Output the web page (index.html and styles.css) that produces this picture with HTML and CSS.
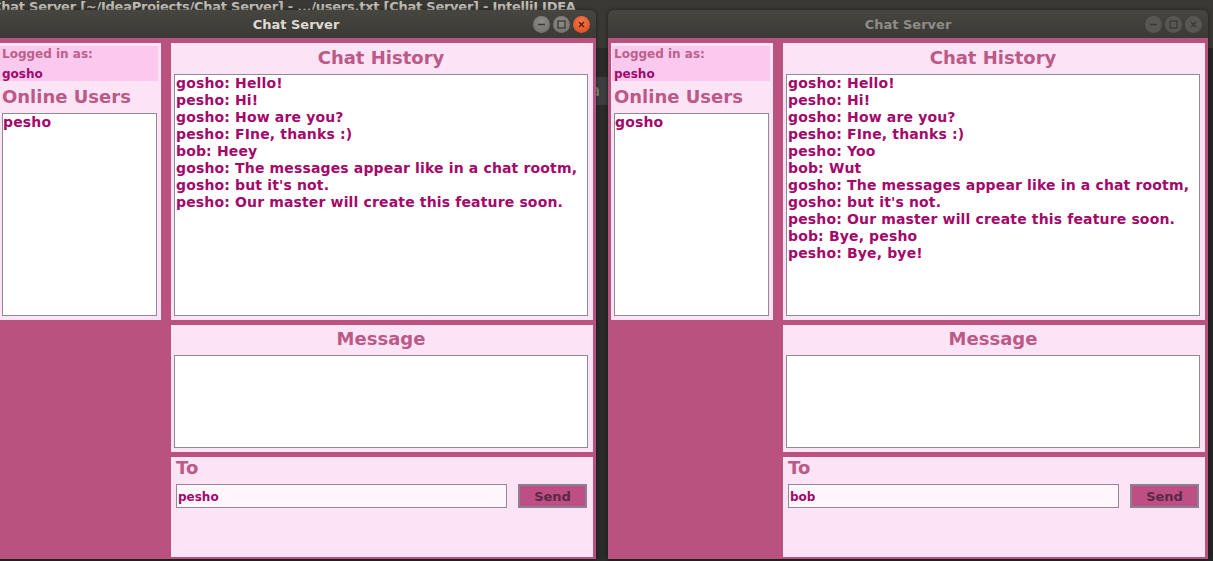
FILE: index.html
```html
<!DOCTYPE html>
<html>
<head>
<meta charset="utf-8">
<title>Chat Server</title>
<link rel="stylesheet" href="styles.css">
</head>
<body>
<div class="desktop">
  <div class="ide-bar"><span class="ide-title">Chat Server [~/IdeaProjects/Chat Server] - .../users.txt [Chat Server] - IntelliJ IDEA</span></div>
  <div class="ide-side"><div class="ide-tab">va</div></div>

  <div class="window win-a active">
    <div class="titlebar">
      <span class="title">Chat Server</span>
      <div class="controls">
        <span class="btn btn-min"><svg width="17" height="17" viewBox="0 0 17 17"><line x1="5" y1="8.5" x2="12" y2="8.5" stroke="currentColor" stroke-width="1.4"/></svg></span>
        <span class="btn btn-max"><svg width="17" height="17" viewBox="0 0 17 17"><rect x="5" y="5" width="7" height="7" fill="none" stroke="currentColor" stroke-width="1.3"/></svg></span>
        <span class="btn btn-close"><svg width="17" height="17" viewBox="0 0 17 17"><path d="M6 6 L11 11 M11 6 L6 11" stroke="currentColor" stroke-width="1.4" fill="none"/></svg></span>
      </div>
    </div>
    <div class="frame">
      <div class="side">
        <div class="logged">
          <div class="logged-label">Logged in as:</div>
          <div class="logged-user">gosho</div>
        </div>
        <div class="heading side-heading">Online Users</div>
        <div class="userlist">pesho</div>
      </div>
      <div class="main">
        <section class="panel history">
          <div class="heading center">Chat History</div>
          <div class="textbox">
            <div>gosho: Hello!</div>
            <div>pesho: Hi!</div>
            <div>gosho: How are you?</div>
            <div>pesho: FIne, thanks :)</div>
            <div>bob: Heey</div>
            <div>gosho: The messages appear like in a chat rootm,</div>
            <div>gosho: but it's not.</div>
            <div>pesho: Our master will create this feature soon.</div>
          </div>
        </section>
        <section class="panel message">
          <div class="heading center">Message</div>
          <div class="textbox"></div>
        </section>
        <section class="panel to">
          <div class="heading">To</div>
          <div class="to-row">
            <div class="to-input">pesho</div>
            <div class="send">Send</div>
          </div>
        </section>
      </div>
    </div>
  </div>

  <div class="window win-b">
    <div class="titlebar">
      <span class="title">Chat Server</span>
      <div class="controls">
        <span class="btn btn-min"><svg width="17" height="17" viewBox="0 0 17 17"><line x1="5" y1="8.5" x2="12" y2="8.5" stroke="currentColor" stroke-width="1.4"/></svg></span>
        <span class="btn btn-max"><svg width="17" height="17" viewBox="0 0 17 17"><rect x="5" y="5" width="7" height="7" fill="none" stroke="currentColor" stroke-width="1.3"/></svg></span>
        <span class="btn btn-close"><svg width="17" height="17" viewBox="0 0 17 17"><path d="M6 6 L11 11 M11 6 L6 11" stroke="currentColor" stroke-width="1.4" fill="none"/></svg></span>
      </div>
    </div>
    <div class="frame">
      <div class="side">
        <div class="logged">
          <div class="logged-label">Logged in as:</div>
          <div class="logged-user">pesho</div>
        </div>
        <div class="heading side-heading">Online Users</div>
        <div class="userlist">gosho</div>
      </div>
      <div class="main">
        <section class="panel history">
          <div class="heading center">Chat History</div>
          <div class="textbox">
            <div>gosho: Hello!</div>
            <div>pesho: Hi!</div>
            <div>gosho: How are you?</div>
            <div>pesho: FIne, thanks :)</div>
            <div>pesho: Yoo</div>
            <div>bob: Wut</div>
            <div>gosho: The messages appear like in a chat rootm,</div>
            <div>gosho: but it's not.</div>
            <div>pesho: Our master will create this feature soon.</div>
            <div>bob: Bye, pesho</div>
            <div>pesho: Bye, bye!</div>
          </div>
        </section>
        <section class="panel message">
          <div class="heading center">Message</div>
          <div class="textbox"></div>
        </section>
        <section class="panel to">
          <div class="heading">To</div>
          <div class="to-row">
            <div class="to-input">bob</div>
            <div class="send">Send</div>
          </div>
        </section>
      </div>
    </div>
  </div>
</div>
</body>
</html>
```

FILE: styles.css
```css
html, body {
  margin: 0;
  padding: 0;
  height: 100%;
}

body {
  background: #262626;
  font-family: "DejaVu Sans", sans-serif;
  overflow: hidden;
}

.desktop {
  position: relative;
  width: 1213px;
  height: 561px;
  overflow: hidden;
}

/* background IDE window */
.ide-bar {
  position: absolute;
  left: 0;
  top: 0;
  width: 1213px;
  height: 48px;
  background: #3a3935;
}

.ide-title {
  position: absolute;
  left: -8px;
  top: -1px;
  font-size: 13px;
  font-weight: bold;
  letter-spacing: -0.25px;
  color: #bfbcb4;
  white-space: nowrap;
}

.ide-side {
  position: absolute;
  left: 560px;
  top: 48px;
  width: 48px;
  height: 513px;
  background: #2b2b2b;
}

.ide-tab {
  margin-top: 29px;
  height: 28px;
  background: #3c3e3f;
  color: #8c9884;
  font-size: 15px;
  line-height: 28px;
  text-align: right;
  padding-right: 8px;
}

/* application windows */
.window {
  position: absolute;
  top: 10px;
  width: 600px;
  height: 549px;
  display: flex;
  flex-direction: column;
  border-radius: 6px 6px 0 0;
  overflow: hidden;
  box-shadow: 0 0 4px rgba(0, 0, 0, 0.5);
}

.win-a {
  left: -4px;
  z-index: 2;
}

.win-b {
  left: 608px;
  z-index: 1;
}

.titlebar {
  height: 28px;
  flex: none;
  background: linear-gradient(#46453f, #3b3a36);
  display: grid;
  grid-template-columns: 1fr auto 1fr;
  align-items: center;
}

.title {
  grid-column: 2;
  font-size: 13px;
  font-weight: bold;
  color: #dfdbd2;
}

.win-b .title {
  color: #8e8c86;
}

.controls {
  grid-column: 3;
  justify-self: end;
  display: flex;
  gap: 3px;
  margin-right: 6px;
  margin-top: 1px;
}

.btn {
  width: 17px;
  height: 17px;
  border-radius: 50%;
  display: block;
  background: radial-gradient(circle at 50% 35%, #8e8c87, #6d6b66);
  color: #3a3935;
}

.btn svg {
  display: block;
}

.btn-close {
  background: radial-gradient(circle at 50% 35%, #f27a4e, #d9461a);
  color: #5a1c08;
}

.win-b .btn {
  background: #585753;
  color: #3b3a36;
}

.frame {
  flex: 1;
  background: #b9527f;
  display: flex;
  gap: 10px;
  padding: 5px 3px 2px;
  align-items: flex-start;
}

.side {
  width: 162px;
  height: 277px;
  box-sizing: border-box;
  flex: none;
  background: #fde3f6;
  padding: 3px 4px 4px 3px;
  display: flex;
  flex-direction: column;
}

.logged {
  background: #fbc9ee;
  height: 35px;
  margin: 0 -1px 0 -2px;
  padding-left: 2px;
  font-size: 12px;
  font-weight: bold;
}

.logged-label {
  line-height: 16px;
  color: #bd5f8c;
}

.logged-user {
  line-height: 16px;
  margin-top: 4px;
  color: #a3086a;
}

.heading {
  font-size: 18px;
  line-height: 21px;
  font-weight: bold;
  color: #bb5987;
}

.center {
  text-align: center;
}

.side-heading {
  margin-top: 5px;
}

.userlist {
  margin-top: 6px;
  flex: 1;
  background: #ffffff;
  border: 1px solid #8f8b95;
  font-size: 14px;
  line-height: 17px;
  font-weight: bold;
  letter-spacing: 0.15px;
  color: #a3086a;
  padding: 0;
}

.main {
  width: 422px;
  flex: none;
  display: flex;
  flex-direction: column;
  gap: 5px;
}

.panel {
  background: #fde3f6;
  box-sizing: border-box;
  display: flex;
  flex-direction: column;
  padding: 0 5px 4px 3px;
}

.history {
  height: 277px;
}

.history .heading {
  padding: 4px 0 6px;
}

.message {
  height: 127px;
}

.message .heading {
  padding: 3px 0 6px;
}

.textbox {
  flex: 1;
  background: #ffffff;
  border: 1px solid #8f8b95;
  font-size: 14px;
  line-height: 17px;
  font-weight: bold;
  letter-spacing: 0.15px;
  color: #a3086a;
  padding: 0 1px;
}

.to {
  height: 100px;
  padding: 0 6px 0 5px;
}

.to-row {
  display: flex;
  gap: 11px;
  margin-top: 6px;
}

.to-input {
  width: 331px;
  height: 24px;
  box-sizing: border-box;
  border: 1px solid #8f8b95;
  background: #fff6fd;
  font-size: 12px;
  line-height: 24px;
  font-weight: bold;
  color: #a3086a;
  padding-left: 1px;
}

.send {
  width: 69px;
  height: 24px;
  box-sizing: border-box;
  border: 2px solid #8a7f93;
  background: #bd4f84;
  color: #5a2945;
  font-size: 13px;
  line-height: 22px;
  font-weight: bold;
  text-align: center;
}
```
